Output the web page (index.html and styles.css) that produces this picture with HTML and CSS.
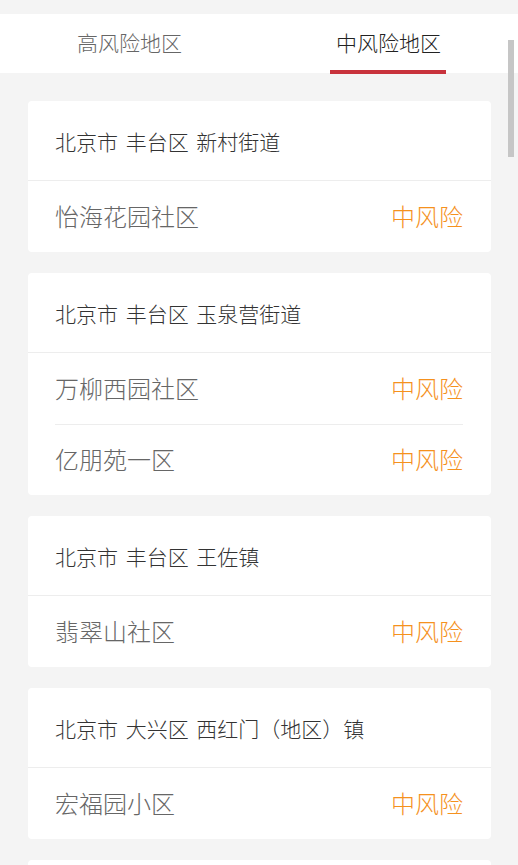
FILE: index.html
```html
<!DOCTYPE html>
<html lang="zh-CN">
<head>
    <meta charset="UTF-8">
    <meta name="viewport" content="width=device-width, initial-scale=1.0">
    <title>风险地区</title>
    <link rel="stylesheet" href="styles.css">
</head>
<body>
    <div class="top-gap"></div>

    <div class="tabs">
        <div class="tab">高风险地区</div>
        <div class="tab active">中风险地区</div>
    </div>

    <div class="area-list">
        <div class="area-card">
            <div class="area-title">北京市 丰台区 新村街道</div>
            <div class="area-item">
                <span class="area-name">怡海花园社区</span>
                <span class="risk-level">中风险</span>
            </div>
        </div>

        <div class="area-card">
            <div class="area-title">北京市 丰台区 玉泉营街道</div>
            <div class="area-item">
                <span class="area-name">万柳西园社区</span>
                <span class="risk-level">中风险</span>
            </div>
            <div class="area-item">
                <span class="area-name">亿朋苑一区</span>
                <span class="risk-level">中风险</span>
            </div>
        </div>

        <div class="area-card">
            <div class="area-title">北京市 丰台区 王佐镇</div>
            <div class="area-item">
                <span class="area-name">翡翠山社区</span>
                <span class="risk-level">中风险</span>
            </div>
        </div>

        <div class="area-card">
            <div class="area-title">北京市 大兴区 西红门（地区）镇</div>
            <div class="area-item">
                <span class="area-name">宏福园小区</span>
                <span class="risk-level">中风险</span>
            </div>
        </div>

        <!-- next card, still loading -->
        <div class="area-card placeholder"></div>
    </div>

    <!-- fake scrollbar thumb of the list -->
    <div class="scroll-thumb"></div>
</body>
</html>
```

FILE: styles.css
```css
:root {
    --bg: #f4f4f4;
    --text-dark: #333;
    --text-grey: #666;
    --orange: #f5911e;
    --red: #c8323c;
    --line: #ededed;
}

body {
    margin: 0;
    background: var(--bg);
    font-family: "Noto Sans CJK SC", "Noto Sans", sans-serif;
    font-weight: 300;
    color: var(--text-dark);
}

.top-gap {
    height: 14px;
}

.tabs {
    display: flex;
    height: 59px;
    background: white;
}

.tab {
    flex: 1;
    position: relative;
    display: flex;
    align-items: center;
    justify-content: center;
    padding-bottom: 4px;
    font-size: 21px;
    color: var(--text-grey);
}

.tab.active {
    color: #222;
}

.tab.active::after {
    content: "";
    position: absolute;
    left: 50%;
    bottom: -1px;
    width: 116px;
    height: 4px;
    margin-left: -59px;
    background: var(--red);
}

.area-list {
    display: flex;
    flex-direction: column;
    gap: 21px;
    padding: 28px 27px 28px 28px;
}

.area-card {
    background: white;
    border-radius: 4px;
}

.area-card.placeholder {
    height: 150px;
}

.area-title {
    display: flex;
    align-items: center;
    height: 79px;
    padding: 0 27px;
    border-bottom: 1px solid var(--line);
    font-size: 21px;
    word-spacing: 3px;
    color: var(--text-dark);
}

.area-item {
    display: flex;
    align-items: center;
    justify-content: space-between;
    height: 71px;
    margin: 0 28px 0 27px;
    padding-bottom: 3px;
    box-sizing: border-box;
    font-size: 24px;
}

.area-item + .area-item {
    border-top: 1px solid var(--line);
}

.area-name {
    color: var(--text-grey);
}

.risk-level {
    color: var(--orange);
}

.scroll-thumb {
    position: fixed;
    top: 40px;
    left: 508px;
    width: 6px;
    height: 117px;
    background: #c6c6c6;
}
```
